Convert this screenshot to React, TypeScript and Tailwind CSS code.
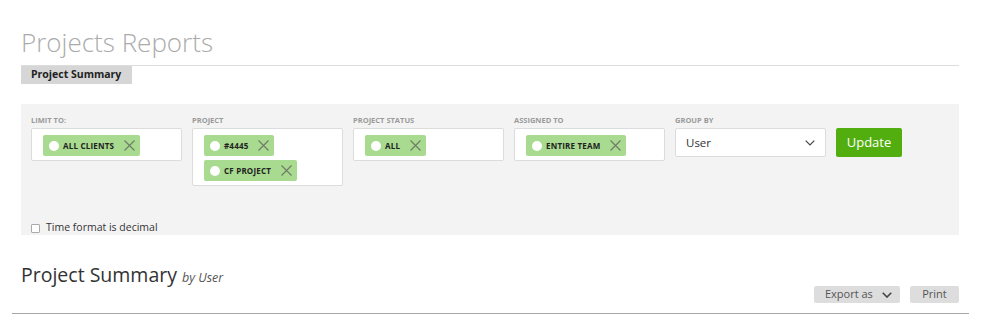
import React from "react";

const F = { fontFamily: '"Open Sans", "Liberation Sans", sans-serif' };

function XIcon() {
  return (
    <svg width="11" height="11" viewBox="0 0 11 11" className="shrink-0">
      <path d="M0.5 0.5 L10.5 10.5 M10.5 0.5 L0.5 10.5" stroke="#6f7a6a" strokeWidth="1.1" fill="none" />
    </svg>
  );
}

function Chip({ label }: { label: string }) {
  return (
    <div className="flex h-[21px] items-center self-start rounded-[2px] bg-[#a8da8f] pl-[6px] pr-[5px]">
      <span className="h-[10px] w-[10px] rounded-full bg-white" />
      <span className="ml-[4px] text-[8px] font-bold uppercase tracking-[0.2px] text-[#222]">{label}</span>
      <span className="ml-[10px] flex items-center">
        <XIcon />
      </span>
    </div>
  );
}

function Field({ label, chips }: { label: string; chips: string[] }) {
  return (
    <div className="flex w-[151px] flex-col">
      <div className="h-[10px] text-[7.5px] font-bold uppercase leading-[10px] text-[#9a9a9a]">{label}</div>
      <div className="mt-[3px] flex flex-col gap-[4px] rounded-[2px] border border-[#dcdcdc] bg-white pb-[4px] pl-[11px] pt-[6px]">
        {chips.map((c) => (
          <Chip key={c} label={c} />
        ))}
      </div>
    </div>
  );
}

export default function App() {
  return (
    <div style={F} className="min-h-[317px] w-[993px] bg-white">
      <div className="w-[959px] pl-[21px]">
        <div className="pt-[25px]">
          <h1 className="h-[34px] text-[26px] font-light leading-[34px] text-[#ababab]">Projects Reports</h1>
          <div className="mt-[6px] border-t border-[#dddddd]" />
          <div className="flex h-[18px] w-[111px] items-center bg-[#d6d6d6] pl-[10px] text-[10.5px] font-bold text-[#222]">
            Project Summary
          </div>
        </div>

        <div className="mt-[20px] flex h-[131px] flex-col bg-[#f3f3f3] pl-[10px] pt-[11px]">
          <div className="flex items-start gap-[10px]">
            <Field label="Limit to:" chips={["All Clients"]} />
            <Field label="Project" chips={["#4445", "CF Project"]} />
            <Field label="Project Status" chips={["All"]} />
            <Field label="Assigned to" chips={["Entire Team"]} />
            <div className="flex w-[151px] flex-col">
              <div className="h-[10px] text-[7.5px] font-bold uppercase leading-[10px] text-[#9a9a9a]">Group by</div>
              <div className="mt-[3px] flex h-[29px] items-center justify-between rounded-[2px] border border-[#dcdcdc] bg-white pl-[10px] pr-[10px]">
                <span className="text-[11.5px] text-[#333]">User</span>
                <svg width="10" height="6" viewBox="0 0 10 6">
                  <path d="M0.7 0.7 L5 5 L9.3 0.7" stroke="#444" strokeWidth="1.2" fill="none" />
                </svg>
              </div>
            </div>
            <div className="mt-[13px] flex h-[29px] w-[66px] items-center justify-center rounded-[2px] bg-[#52ae0f] text-[13px] text-white">
              Update
            </div>
          </div>
          <div className="mt-auto flex h-[14px] items-center">
            <span className="h-[9px] w-[9px] rounded-[1px] border border-[#aaa] bg-white" />
            <span className="ml-[6px] text-[10.5px] text-[#333]">Time format is decimal</span>
          </div>
        </div>

        <div className="mt-[26px] flex items-start justify-between">
          <div className="flex items-baseline">
            <span className="text-[19.5px] leading-[28px] text-[#333]">Project Summary</span>
            <span className="ml-[5px] text-[12.5px] italic text-[#555]">by User</span>
          </div>
          <div className="mt-[25px] flex gap-[10px]">
            <div className="flex h-[17px] w-[86px] items-center rounded-[2px] bg-[#dddddd] pl-[11px] text-[11px] text-[#555]">
              <span>Export as</span>
              <svg width="10" height="6" viewBox="0 0 10 6" className="ml-[9px]">
                <path d="M0.7 0.7 L5 5 L9.3 0.7" stroke="#444" strokeWidth="1.6" fill="none" />
              </svg>
            </div>
            <div className="flex h-[17px] w-[49px] items-center justify-center rounded-[2px] bg-[#dddddd] text-[11px] text-[#555]">
              Print
            </div>
          </div>
        </div>
        <div className="-ml-[9px] mt-[10px] w-[957px] border-t border-[#a8a8a8]" />
      </div>
    </div>
  );
}
